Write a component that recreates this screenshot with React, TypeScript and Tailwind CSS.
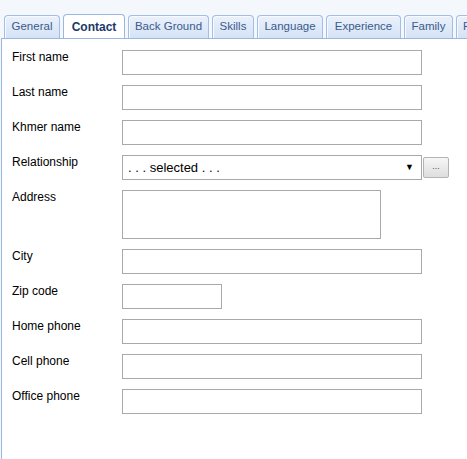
const tabs = [
  { label: "General", w: "w-[56px]" },
  { label: "Contact", w: "w-[62px]", active: true },
  { label: "Back Ground", w: "w-[81px]" },
  { label: "Skills", w: "w-[42px]" },
  { label: "Language", w: "w-[66px]" },
  { label: "Experience", w: "w-[75px]" },
  { label: "Family", w: "w-[49px]" },
]

const fields = [
  { label: "First name", kind: "text" },
  { label: "Last name", kind: "text" },
  { label: "Khmer name", kind: "text" },
  { label: "Relationship", kind: "select" },
  { label: "Address", kind: "area" },
  { label: "City", kind: "text" },
  { label: "Zip code", kind: "short" },
  { label: "Home phone", kind: "text" },
  { label: "Cell phone", kind: "text" },
  { label: "Office phone", kind: "text" },
]

function Field({ kind }: { kind: string }) {
  if (kind === "select") {
    return (
      <div className="flex items-center gap-[1px]">
        <div className="w-[300px] h-[25px] border border-[#a9a9a9] bg-white flex items-center justify-between pl-[5px] pr-[7px] text-[13px] text-black font-['Liberation_Sans',Arial,sans-serif]">
          <span>. . . selected . . .</span>
          <span className="text-[9px]">▼</span>
        </div>
        <button className="w-[26px] h-[21px] border border-[#b4b4b4] rounded-[2px] bg-gradient-to-b from-[#f6f6f6] to-[#dedede] text-[9px] text-[#555] leading-none pb-[2px]">
          ...
        </button>
      </div>
    )
  }
  if (kind === "area") {
    return <div className="w-[259px] h-[49px] border border-[#a9a9a9] bg-white" />
  }
  if (kind === "short") {
    return <div className="w-[100px] h-[25px] border border-[#a9a9a9] bg-white" />
  }
  return <div className="w-[300px] h-[25px] border border-[#a9a9a9] bg-white" />
}

export default function App() {
  return (
    <div className="w-[467px] h-[459px] overflow-hidden bg-[#f4f7fb] font-['Liberation_Sans',Tahoma,sans-serif] flex flex-col">
      {/* tab strip */}
      <div className="flex items-end gap-[3px] pl-[3px] pt-[14px] h-[39px] border-b border-[#9bb6e0] ml-[1px] shrink-0 overflow-hidden">
        {tabs.map((t) =>
          t.active ? (
            <div
              key={t.label}
              className={`${t.w} shrink-0 h-[25px] -mb-[1px] bg-white border border-b-0 border-[#9bb6e0] rounded-t-[4px] flex items-center justify-center text-[12px] font-bold text-[#1b3869]`}
            >
              {t.label}
            </div>
          ) : (
            <div
              key={t.label}
              className={`${t.w} shrink-0 h-[23px] bg-gradient-to-b from-[#eaf1fb] to-[#d5e3f6] border border-b-0 border-[#a3bde5] rounded-t-[4px] shadow-[inset_1px_1px_0_#f7faff] flex items-center justify-center text-[11.5px] text-[#3d5a8a]`}
            >
              {t.label}
            </div>
          )
        )}
        {/* next tab, cut off by the window edge */}
        <div className="w-[50px] shrink-0 h-[23px] bg-gradient-to-b from-[#eaf1fb] to-[#d5e3f6] border border-b-0 border-[#a3bde5] rounded-t-[4px] shadow-[inset_1px_1px_0_#f7faff] flex items-center pl-[6px] text-[11.5px] text-[#3d5a8a]">
          F
        </div>
      </div>

      {/* panel */}
      <div className="flex-1 ml-[1px] border-l border-[#9bb6e0] bg-white pt-[11px] pl-[10px]">
        <div className="flex flex-col gap-[10px]">
          {fields.map((f) => (
            <div key={f.label} className="flex items-start">
              <div className="w-[110px] leading-[15px] text-[12px] text-black">{f.label}</div>
              <Field kind={f.kind} />
            </div>
          ))}
        </div>
      </div>
    </div>
  )
}
